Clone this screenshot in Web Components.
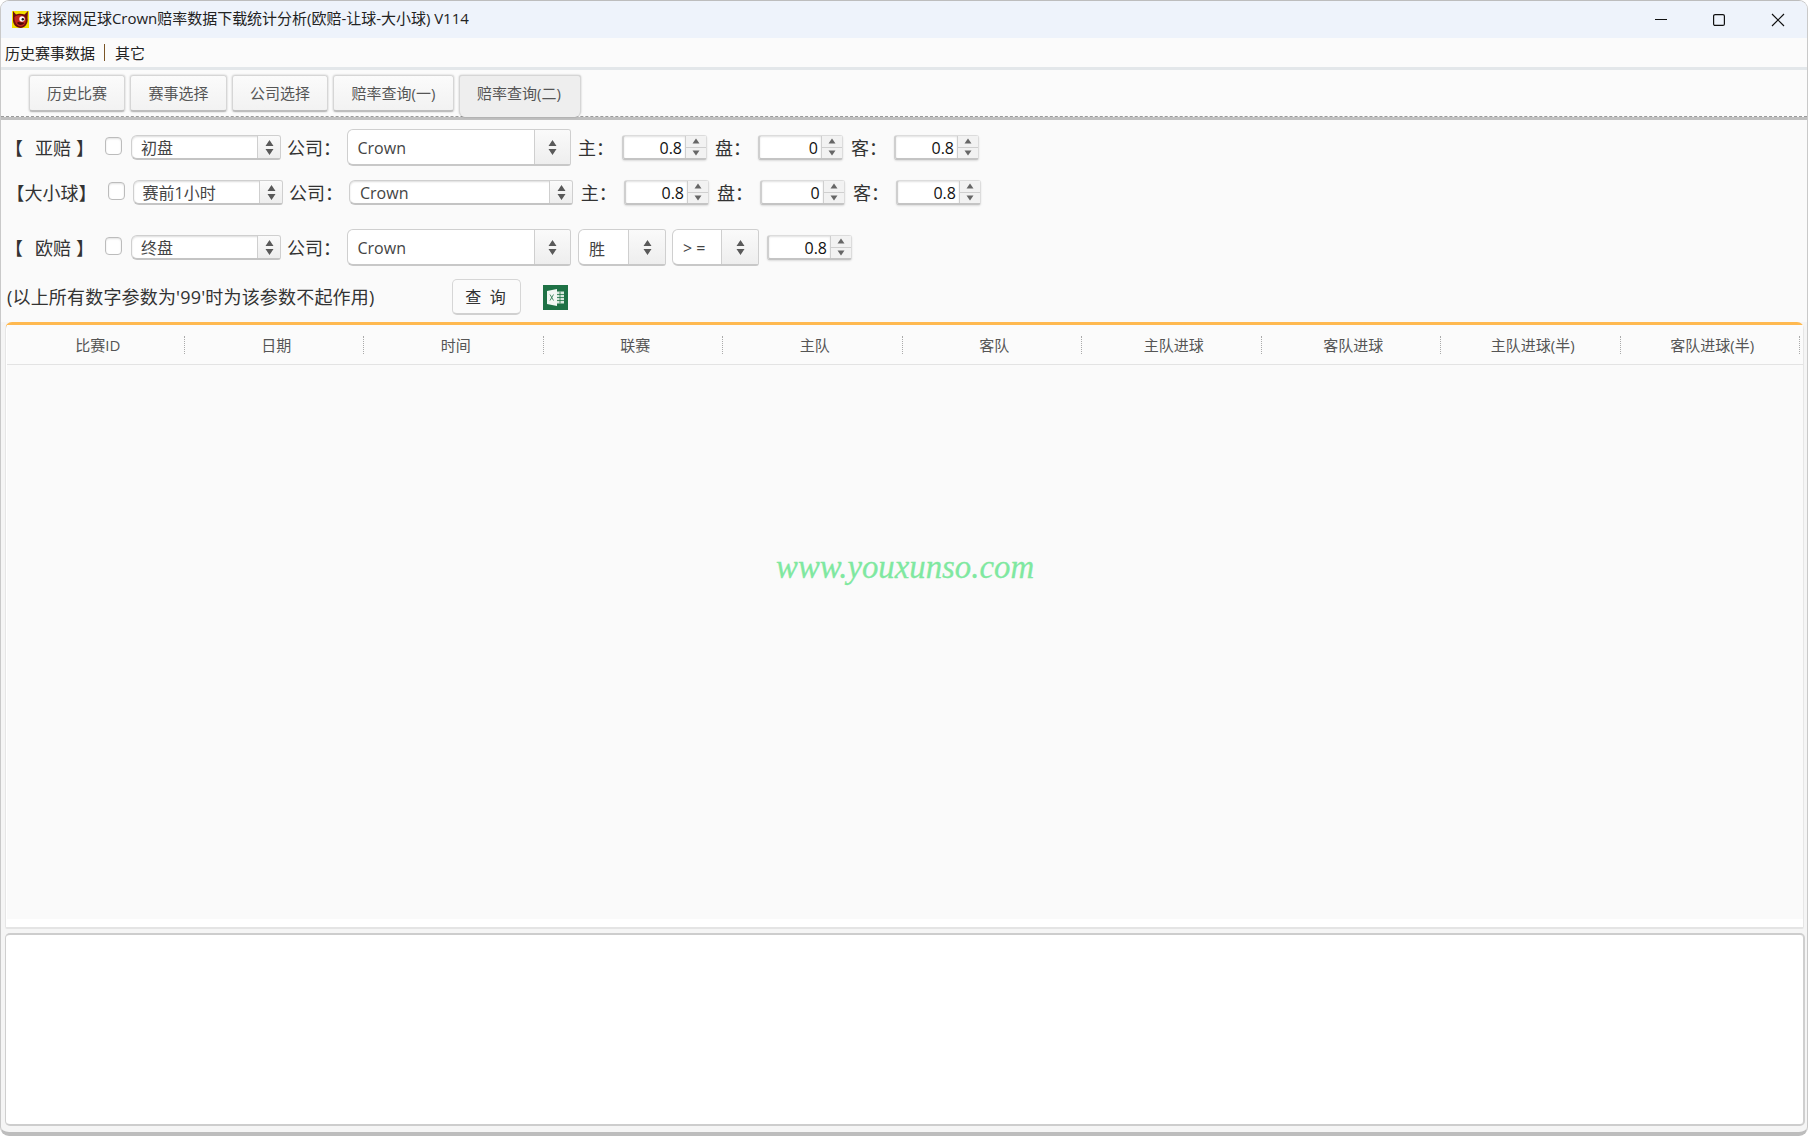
<!DOCTYPE html>
<html lang="zh"><head><meta charset="utf-8"><title>球探网足球</title>
<style>
html,body{margin:0;padding:0;background:#fff;width:1809px;height:1136px;overflow:hidden}
body{font-family:"Open Sans","Noto Sans CJK SC",sans-serif;color:#333}
</style></head><body>
<app-window>
  <title-bar>球探网足球Crown赔率数据下载统计分析(欧赔-让球-大小球) V114</title-bar>
  <menu-bar></menu-bar>
  <tab-bar></tab-bar>
  <query-form></query-form>
  <data-table></data-table>
  <log-area></log-area>
</app-window>
<script>
function comp(name, css, html){
  customElements.define(name, class extends HTMLElement{
    constructor(){super();const r=this.attachShadow({mode:'open'});r.innerHTML='<style>'+css+'</style>'+html;}
  });
}
const updown='<svg width="9" height="17" viewBox="0 0 9 17"><path d="M4.500 1 8.500 7H.5z M.5 10h8l-4 6z" fill="#5a5a5a"/></svg>';

comp('app-window',`:host{display:flex;flex-direction:column;box-sizing:border-box;width:1808px;height:1136px;background:#f5f5f5;border-top:1px solid #bdbdbd;border-left:1px solid #c9c9c9;border-right:1px solid #c9c9c9;border-bottom:4px solid #bdbdbd;border-radius:9px;overflow:hidden}`,`<slot></slot>`);

comp('title-bar',`:host{display:flex;align-items:center;height:37px;background:#eef3fb;font-size:15px;color:#222;flex:none;padding-left:11px}
 .t{margin-left:8px;white-space:nowrap;padding-bottom:5px;letter-spacing:-.02px}
 .w{margin-left:auto;display:flex;align-items:center}
 .w svg{display:block}`,
 `<svg width="17" height="17" viewBox="0 0 17 17"><rect width="17" height="17" fill="#f4e000"/><path d="M1 0 4 3.500C6 2.500 10 2.500 12.500 3.500L16 0 15.500 7C16.500 11 14 16.500 9 17 4 17 .5 13 1 8z" fill="#6e0f0c"/><path d="M2.500 6C5 3.500 10.500 3.500 13 6 15 10 13 15 9 15.500 5 15.500 2 11 2.500 6z" fill="#c4281d"/><circle cx="10" cy="8" r="2.700" fill="#fff"/><circle cx="10.800" cy="8.200" r="1.200" fill="#1a1a1a"/><path d="M5 12C7 14.500 10 14.500 12.500 12L11 11.500 6 11z" fill="#4f0a07"/></svg>
 <span class="t"><slot></slot></span>
 <span class="w">
 <svg width="14" height="14" viewBox="0 0 14 14" style="margin-right:44px"><path d="M1 6.500H13" stroke="#111" stroke-width="1.200"/></svg>
 <svg width="14" height="14" viewBox="0 0 14 14" style="margin-right:45px"><rect x="1.600" y="1.600" width="10.800" height="10.800" rx="1.500" fill="none" stroke="#111" stroke-width="1.200"/></svg>
 <svg width="14" height="14" viewBox="0 0 14 14" style="margin-right:22px"><path d="M1 1 13 13M13 1 1 13" stroke="#111" stroke-width="1.200"/></svg>
 </span>`);

comp('menu-bar',`:host{display:flex;align-items:center;flex:none;box-sizing:border-box;height:32px;padding:0 0 1px 4px;background:#fbfbfb;border-bottom:3px solid #e3e7ea;font-size:15px;color:#222}
 i{display:block;width:1.500px;height:17px;background:#7a5526;margin:0 10px 0 8.500px}`,
 `<span>历史赛事数据</span><i></i><span>其它</span>`);

comp('tab-button',`:host{display:flex;align-items:center;justify-content:center;box-sizing:border-box;height:37px;padding-bottom:2px;font-size:15px;color:#555;background:linear-gradient(#fbfbfb,#f2f2f2);border:1px solid #d6d6d6;border-bottom:2px solid #bdbdbd;border-radius:3px;box-shadow:0 0 2px rgba(0,0,0,.25);margin-right:5px}
 :host([active]){height:42px;padding:0 2px 9px 0;background:#eeeeee;border-bottom:0;border-radius:3px 3px 6px 6px;color:#555;margin-right:0}`,`<slot></slot>`);

comp('tab-bar',`:host{display:block;flex:none;height:50px;box-sizing:border-box;background:#fbfbfb;border-bottom:3px solid #c0c0c0;position:relative}
 .r{display:flex;align-items:flex-start;padding:5px 0 0 28px}
 .d{position:absolute;left:0;right:0;bottom:0;border-bottom:1px dashed #9a9a9a}`,
 `<div class="d"></div><div class="r">
 <tab-button style="width:96px">历史比赛</tab-button><tab-button style="width:97px">赛事选择</tab-button><tab-button style="width:96px">公司选择</tab-button><tab-button style="width:121px">赔率查询(一)</tab-button><tab-button active style="width:122px;position:relative">赔率查询(二)</tab-button></div>`);

comp('ui-check',`:host{display:block;box-sizing:border-box;width:17px;height:18px;margin-bottom:3px;background:#fff;border:1px solid #bcbcbc;border-radius:4px;box-shadow:inset 0 1px 2px rgba(0,0,0,.12);flex:none}`,``);

comp('ui-select',`:host{display:flex;box-sizing:border-box;height:25px;background:#fff;border:1px solid #cfcfcf;border-bottom:2px solid #c4c4c4;border-radius:6px 3px 3px 6px;flex:none;font-size:16px;color:#444;overflow:hidden;box-shadow:inset 0 1px 2px rgba(0,0,0,.14)}
 :host([big]){height:37px;border-width:1px;border-bottom:2px solid #c8c8c8;box-shadow:none}
 .v{flex:1;padding:var(--pt,0px) 0 0 9px;display:flex;align-items:center;white-space:pre;min-width:0}
 :host([big]) .v{padding-left:10px;padding-top:1px;font-size:16px}
 .a{flex:none;width:var(--aw,22px);display:flex;align-items:center;justify-content:center;background:linear-gradient(#fafafa,#eeeeee);border-left:1px solid #cfcfcf}`,
 `<span class="v"><slot></slot></span><span class="a">${updown}</span>`);

comp('ui-spin',`:host{display:flex;box-sizing:border-box;width:85px;height:25px;flex:none;font-size:16px;color:#111;background:#fff;border:1px solid #dcdcdc;border-bottom:2px solid #c4c4c4;border-left:2px solid #cfcfcf;border-radius:3px;box-shadow:0 1px 2px rgba(0,0,0,.12)}
 .v{flex:1;display:flex;align-items:center;justify-content:flex-end;padding:1px 3px 0 0;box-shadow:inset 0 1px 2px rgba(0,0,0,.12)}
 .a{flex:none;width:20px;display:flex;flex-direction:column;background:#f2f2f2;border-left:1px solid #cfcfcf}
 .a span{flex:1;display:flex;align-items:center;justify-content:center}
 .a span:first-child{border-bottom:1px solid #cfcfcf}`,
 `<span class="v"><slot></slot></span><span class="a"><span><svg width="8" height="6"><path d="M4 .5 7.500 5.500H.5z" fill="#666"/></svg></span><span><svg width="8" height="6"><path d="M.5 .5h7L4 5.500z" fill="#666"/></svg></span></span>`);

comp('query-form',`:host{display:flex;flex-direction:column;flex:none;height:202px;box-sizing:border-box;padding-top:9px;background:#fafafa;font-size:18px;color:#333;white-space:pre}
 .row{display:flex;align-items:center;flex:none;padding-left:4px}
 .tall{height:37px}.short{height:25px}
 .lb{flex:none;padding-bottom:2px;box-sizing:border-box}
 .cap{flex:none;padding-bottom:2px;box-sizing:border-box}
 .ml12{margin-left:12px}.ml5{margin-left:5px}
 .btn{flex:none;box-sizing:border-box;width:69px;height:36px;padding:0 2px 2px 0;display:flex;align-items:center;justify-content:center;background:#fbfbfb;border:1px solid #d6d6d6;border-bottom:2px solid #d0d0d0;border-radius:5px;font-size:16px;color:#333;margin-left:77px}
 `,
 `<div class="row tall">
   <span class="lb" style="width:100px">【<span class="ml12">亚赔</span><span class="ml5">】</span></span><ui-check></ui-check>
   <ui-select style="width:150px;margin-left:9px">初盘</ui-select>
   <span class="cap" style="width:59.500px;margin-left:6px">公司：</span>
   <ui-select big style="width:224.500px;--aw:35px">Crown</ui-select>
   <span class="cap" style="width:44px;margin-left:7px">主：</span><ui-spin>0.8</ui-spin>
   <span class="cap" style="width:43px;margin-left:8px">盘：</span><ui-spin>0</ui-spin>
   <span class="cap" style="width:43px;margin-left:8px">客：</span><ui-spin>0.8</ui-spin>
  </div>
  <div class="row short" style="margin-top:14px">
   <span class="lb" style="width:102.500px;padding-left:1.500px">【大小球】</span><ui-check></ui-check>
   <ui-select style="width:150.500px;margin-left:8px">赛前1小时</ui-select>
   <span class="cap" style="width:60px;margin-left:6px">公司：</span>
   <ui-select style="width:224px;--aw:22px;--pt:1px;padding-left:1px">Crown</ui-select>
   <span class="cap" style="width:43px;margin-left:7.700px">主：</span><ui-spin style="width:85.300px">0.8</ui-spin>
   <span class="cap" style="width:42.700px;margin-left:8px">盘：</span><ui-spin>0</ui-spin>
   <span class="cap" style="width:43px;margin-left:8.300px">客：</span><ui-spin>0.8</ui-spin>
  </div>
  <div class="row tall" style="margin-top:24px">
   <span class="lb" style="width:100px">【<span class="ml12">欧赔</span><span class="ml5">】</span></span><ui-check></ui-check>
   <ui-select style="width:150px;margin-left:9px">终盘</ui-select>
   <span class="cap" style="width:59.500px;margin-left:6px">公司：</span>
   <ui-select big style="width:224.500px;--aw:35px">Crown</ui-select>
   <ui-select big style="width:88px;--aw:36px;margin-left:7px">胜</ui-select>
   <ui-select big style="width:87px;--aw:36px;margin-left:6px">&gt; =</ui-select>
   <ui-spin style="margin-left:8px">0.8</ui-spin>
  </div>
  <div class="row" style="height:36px;margin-top:13px;padding-left:6px">
   <span class="lb" style="width:368px;white-space:nowrap;letter-spacing:.18px">(以上所有数字参数为'99'时为该参数不起作用)</span>
   <span class="btn">查  询</span>
   <svg style="margin-left:22px;flex:none" width="25" height="25" viewBox="0 0 25 25"><rect width="25" height="25" fill="#1e7145"/><path d="M4 6 14 4V21L4 19z" fill="#f2f7f3"/><path d="M14 6.500H21V18.500H14z" fill="#d8e8dd"/><path d="M14 9.500H21M14 12.500H21M14 15.500H21M17 6.500V18.500" stroke="#1e7145" stroke-width=".8"/><path d="M7 9.500 10.500 15.500M10.500 9.500 7 15.500" stroke="#1e7145" stroke-width=".8"/></svg>
  </div>`);

comp('data-table',`:host{display:flex;flex-direction:column;flex:1;min-height:0;box-sizing:border-box;margin:0 3px 0 4px;padding:0 0 8px 1px;background:#fff;border-top:3px solid #ffb950;border-left:1px solid #e6e6e6;border-right:1px solid #e6e6e6;border-bottom:2px solid #e4e4e4;border-radius:7px 7px 2px 2px;position:relative}
 .h{display:grid;grid-template-columns:177.500px repeat(9,179.500px);align-items:center;height:39px;flex:none;background:#fbfbfb;border-bottom:1px solid #e3e3e3;box-sizing:content-box}
 .h span{box-sizing:border-box;height:18px;line-height:18px;text-align:center;font-size:15px;color:#555;border-right:1px dotted #aaa;padding-left:5px}
 .b{flex:1;background:#fafafa;display:flex;position:relative}
 .wm{position:absolute;left:769px;top:184px;font:italic 32.800px "Liberation Serif",serif;color:#7fe8a0;white-space:nowrap;-webkit-text-stroke:.3px #7fe8a0}`,
 `<div class="h">${['比赛ID','日期','时间','联赛','主队','客队','主队进球','客队进球','主队进球(半)','客队进球(半)'].map(t=>`<span>${t}</span>`).join('')}</div><div class="b"><div class="wm">www.youxunso.com</div></div>`);

comp('log-area',`:host{display:block;flex:none;box-sizing:border-box;height:193px;margin:4px 2px 6px 4px;background:#fff;border:1px solid #cfcfcf;border-top:2px solid #cdcdcd;border-bottom:2px solid #cdcdcd;border-right:2px solid #cfcfcf;border-radius:5px}`,``);
</script>
</body></html>
